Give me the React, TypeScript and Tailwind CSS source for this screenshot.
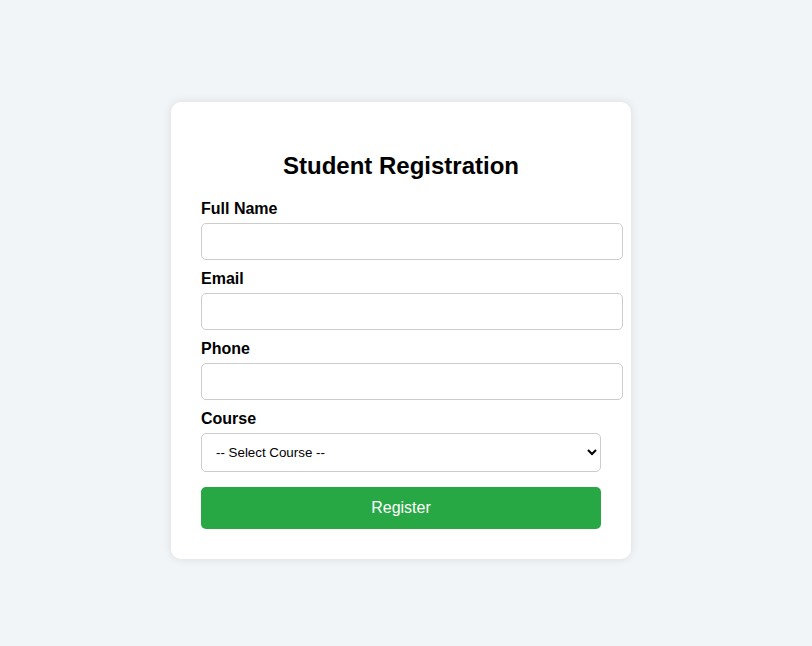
const fields = [
  { id: "name", label: "Full Name", type: "text" },
  { id: "email", label: "Email", type: "email" },
  { id: "phone", label: "Phone", type: "tel" },
];

export default function App() {
  return (
    <div className="min-h-screen bg-[#f2f5f7] font-['Liberation_Sans',Arial,sans-serif] text-black">
      <div className="flex justify-center pt-[102px] pr-[10px]">
        <form className="w-[460px] rounded-[10px] bg-white p-[30px] shadow-[0_0_10px_rgba(0,0,0,0.1)]">
          <h2 className="mt-[20px] mb-[20px] text-center text-[24px] leading-[28px] font-bold">Student Registration</h2>

          {fields.map((f) => (
            <div key={f.id}>
              <label htmlFor={f.id} className="mb-[5px] block text-[16px] leading-[18px] font-bold">
                {f.label}
              </label>
              <input
                id={f.id}
                type={f.type}
                className="mb-[10px] box-content block h-[15px] w-full rounded-[5px] border border-[#ccc] p-[10px] text-[13.33px] leading-[15px]"
              />
            </div>
          ))}

          <label htmlFor="course" className="mb-[5px] block text-[16px] leading-[18px] font-bold">
            Course
          </label>
          <select
            id="course"
            defaultValue=""
            className="mb-[15px] block h-[39px] w-full rounded-[5px] border border-[#ccc] bg-white px-[10px] text-[13.33px]"
          >
            <option value="">-- Select Course --</option>
            <option>Computer Science</option>
            <option>Business</option>
            <option>Engineering</option>
          </select>

          <button
            type="submit"
            className="block h-[42px] w-full rounded-[5px] bg-[#28a745] text-[16px] text-white"
          >
            Register
          </button>
        </form>
      </div>
    </div>
  );
}
